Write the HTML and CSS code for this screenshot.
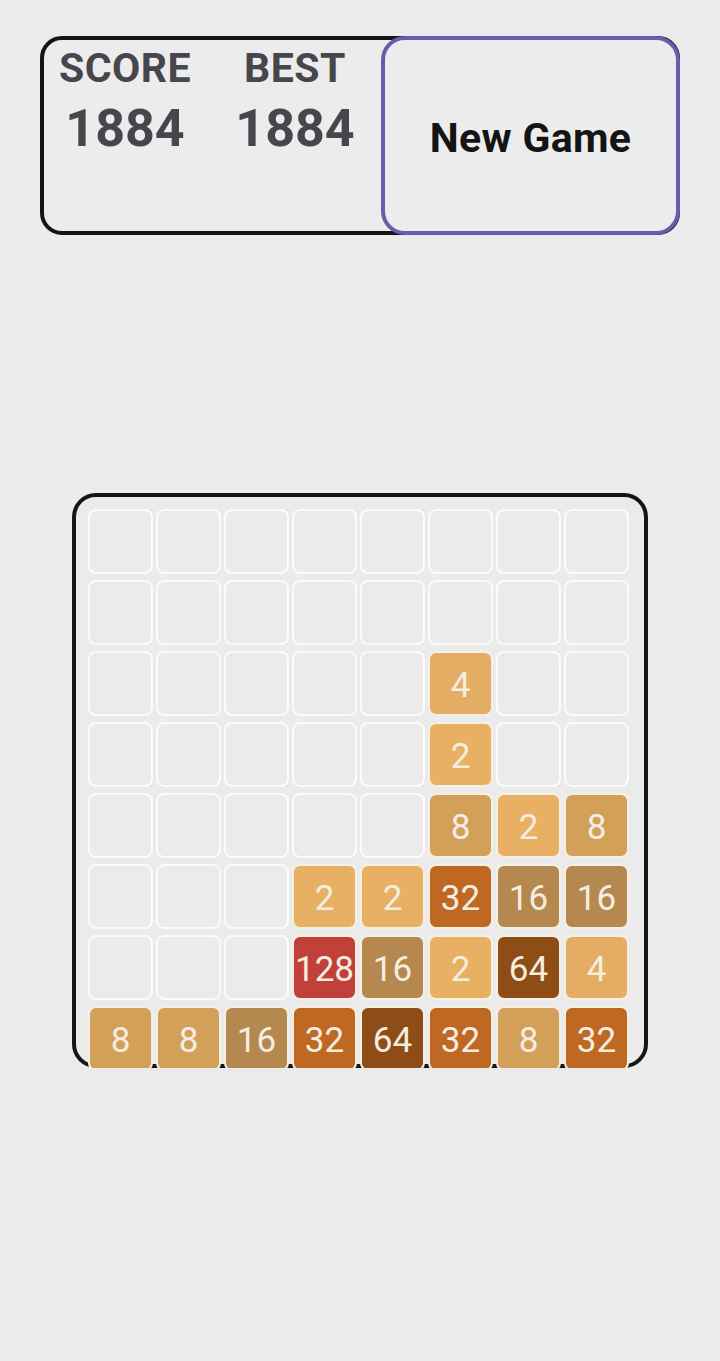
FILE: index.html
```html
<!DOCTYPE html>
<html>
<head>
<meta charset="utf-8">
<link rel="stylesheet" href="styles.css">
</head>
<body>
<header class="topbar">
  <div class="stats">
    <div class="stat">
      <div class="stat-label">SCORE</div>
      <div class="stat-value">1884</div>
    </div>
    <div class="stat">
      <div class="stat-label">BEST</div>
      <div class="stat-value">1884</div>
    </div>
  </div>
  <button class="new-game">New Game</button>
</header>

<div class="board-clip">
  <div class="board">
    <div class="grid">
      <div class="cell"></div><div class="cell"></div><div class="cell"></div><div class="cell"></div><div class="cell"></div><div class="cell"></div><div class="cell"></div><div class="cell"></div>
      <div class="cell"></div><div class="cell"></div><div class="cell"></div><div class="cell"></div><div class="cell"></div><div class="cell"></div><div class="cell"></div><div class="cell"></div>
      <div class="cell"></div><div class="cell"></div><div class="cell"></div><div class="cell"></div><div class="cell"></div><div class="cell t4">4</div><div class="cell"></div><div class="cell"></div>
      <div class="cell"></div><div class="cell"></div><div class="cell"></div><div class="cell"></div><div class="cell"></div><div class="cell t2">2</div><div class="cell"></div><div class="cell"></div>
      <div class="cell"></div><div class="cell"></div><div class="cell"></div><div class="cell"></div><div class="cell"></div><div class="cell t8">8</div><div class="cell t2">2</div><div class="cell t8">8</div>
      <div class="cell"></div><div class="cell"></div><div class="cell"></div><div class="cell t2">2</div><div class="cell t2">2</div><div class="cell t32">32</div><div class="cell t16">16</div><div class="cell t16">16</div>
      <div class="cell"></div><div class="cell"></div><div class="cell"></div><div class="cell t128">128</div><div class="cell t16">16</div><div class="cell t2">2</div><div class="cell t64">64</div><div class="cell t4">4</div>
      <div class="cell t8">8</div><div class="cell t8">8</div><div class="cell t16">16</div><div class="cell t32">32</div><div class="cell t64">64</div><div class="cell t32">32</div><div class="cell t8">8</div><div class="cell t32">32</div>
    </div>
  </div>
</div>
</body>
</html>
```

FILE: styles.css
```css
html, body {
  margin: 0;
  padding: 0;
  background: #ebebeb;
  font-family: Roboto, "Noto Sans", sans-serif;
}

.topbar {
  box-sizing: border-box;
  margin: 36px 40px 0 40px;
  height: 199px;
  border: 4px solid #151515;
  border-radius: 22px;
  background: #ececec;
  display: flex;
  align-items: stretch;
}

.stats {
  display: grid;
  grid-template-columns: 170px 170px;
  margin-left: -4px;
  padding-top: 8px;
  align-content: start;
}

.stat {
  display: flex;
  flex-direction: column;
  align-items: center;
}

.stat-label {
  font-size: 41px;
  line-height: 40px;
  font-weight: 700;
  color: #47464c;
  letter-spacing: 0.5px;
}

.stat-value {
  margin-top: 15px;
  font-size: 52px;
  line-height: 52px;
  font-weight: 700;
  color: #47464c;
}

.new-game {
  box-sizing: border-box;
  margin: -4px -4px -4px auto;
  width: 299px;
  border: 4px solid #6a5bab;
  border-radius: 24px;
  background: #ececec;
  font-family: Roboto, "Noto Sans", sans-serif;
  font-size: 41px;
  font-weight: 700;
  letter-spacing: 0.3px;
  color: #141414;
  padding: 4px 0 0 0;
}

.board-clip {
  margin: 258px 0 0 72px;
  width: 576px;
  height: 575px;
  overflow: hidden;
}

.board {
  box-sizing: border-box;
  width: 576px;
  height: 575px;
  border: 4px solid #151515;
  border-radius: 24px;
  background: #ebebeb;
  padding: 12px 0 0 12px;
}

.grid {
  display: grid;
  grid-template-columns: repeat(8, 65px);
  grid-auto-rows: 65px;
  column-gap: 3px;
  row-gap: 6px;
}

.cell {
  box-sizing: border-box;
  border: 2px solid #fbfbfb;
  border-radius: 8px;
  background: #ebebeb;
  display: flex;
  align-items: center;
  justify-content: center;
  padding-top: 4px;
  font-size: 35px;
  color: #f4ede0;
}

.t2 { background: #e7b063; border-color: #f6efe4; }
.t4 { background: #e3ad63; border-color: #f6efe4; }
.t8 { background: #d3a05a; border-color: #f6efe4; }
.t16 { background: #b4884f; border-color: #f6efe4; }
.t32 { background: #bf6823; border-color: #f6efe4; }
.t64 { background: #8e4d17; border-color: #f6efe4; }
.t128 { background: #c1413a; border-color: #f6efe4; }
```
